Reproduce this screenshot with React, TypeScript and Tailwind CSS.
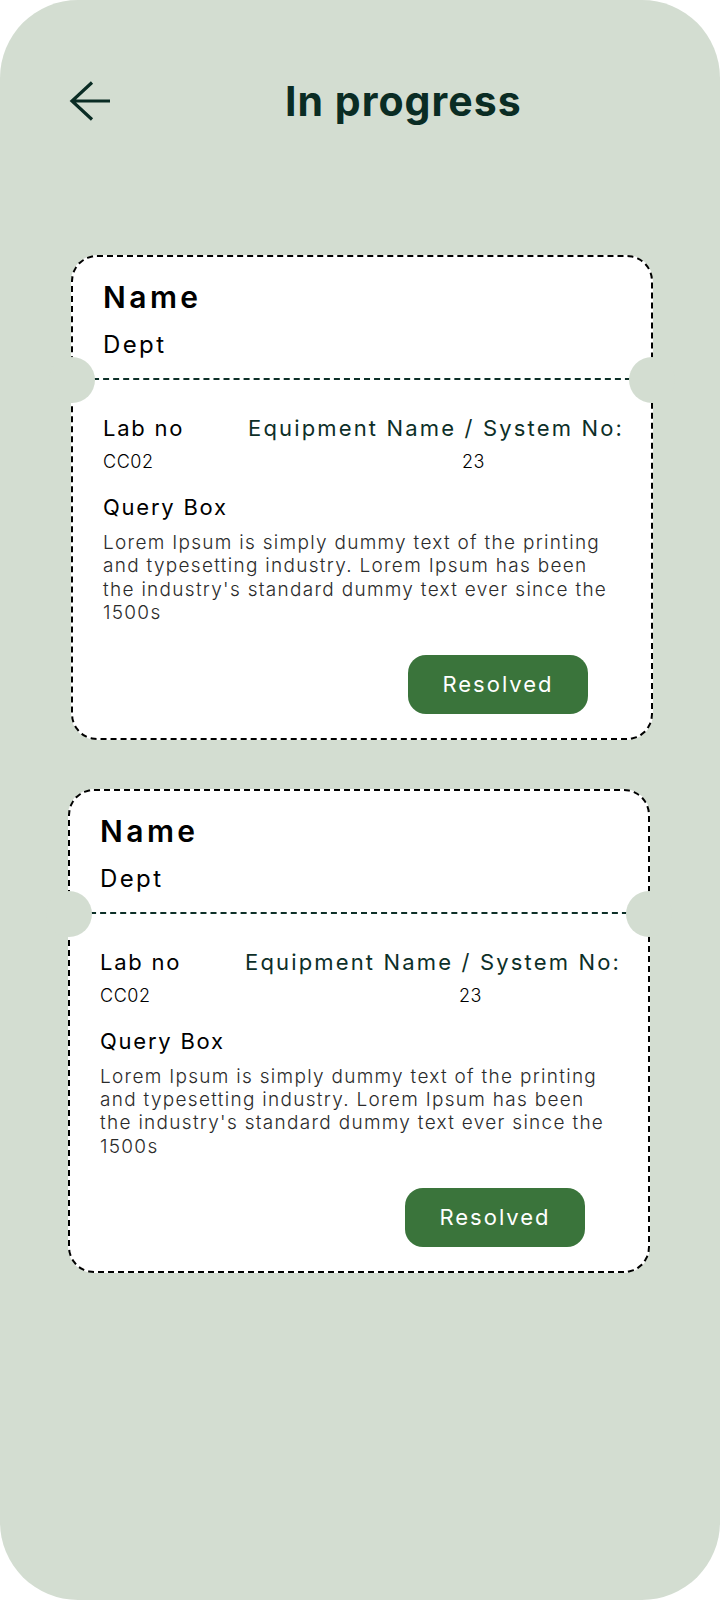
import React from "react";

const font = { fontFamily: "Inter, 'Noto Sans', sans-serif" };

function Ticket({ offset }: { offset: string }) {
  return (
    <div
      className={`relative w-[582px] rounded-[26px] border-2 border-dashed border-black bg-white ${offset}`}
    >
      {/* top part */}
      <div className="px-[30px] pt-[22px] h-[121px]">
        <h2 className="text-[30px] font-semibold leading-[36px] text-black tracking-[0.115em]">Name</h2>
        <p className="mt-[15px] text-[24px] font-normal leading-[30px] text-black tracking-[0.1em]">Dept</p>
      </div>

      {/* divider */}
      <div className="border-t-2 border-dashed border-[#0d2f28]" />

      {/* notches */}
      <span className="absolute left-[-24px] top-[100px] h-[46px] w-[46px] rounded-full bg-[#d3ddd1]" />
      <span className="absolute right-[-24px] top-[100px] h-[46px] w-[46px] rounded-full bg-[#d3ddd1]" />

      <div className="px-[30px] pt-[34px] pb-[24px]">
        <div className="flex items-baseline whitespace-nowrap text-[22px] leading-[28px] tracking-[0.08em]">
          <span className="w-[145px] shrink-0 text-black">Lab no</span>
          <span className="text-[#0d2f28] tracking-[0.098em]">Equipment Name / System No:</span>
        </div>
        <div className="mt-[8px] flex items-baseline text-[18px] font-light leading-[24px] text-black tracking-[0.03em]">
          <span className="w-[359px] shrink-0">CC02</span>
          <span>23</span>
        </div>

        <h3 className="mt-[19px] text-[22px] leading-[28px] text-black tracking-[0.08em]">Query Box</h3>
        <p className="mt-[10px] whitespace-nowrap text-[19px] font-light leading-[23.4px] text-[#2b2b2b] tracking-[0.068em]">
          Lorem Ipsum is simply dummy text of the printing
          <br />
          and typesetting industry. Lorem Ipsum has been
          <br />
          the industry's standard dummy text ever since the
          <br />
          1500s
        </p>

        <div className="mt-[30px] flex justify-end pr-[33px]">
          <button className="h-[59px] w-[180px] rounded-[18px] bg-[#3a743b] text-[22px] font-normal text-white tracking-[0.09em]">
            Resolved
          </button>
        </div>
      </div>
    </div>
  );
}

export default function App() {
  return (
    <div className="h-[1600px] w-[720px] bg-white" style={font}>
      <div className="h-full w-full overflow-hidden rounded-[78px] bg-[#d3ddd1]">
        {/* Header */}
        <header className="flex items-center pl-[69px] pt-[78px]">
          <svg width="42" height="40" viewBox="0 0 42 40" fill="none" className="text-[#0a2c24]">
            <path d="M41 20H3M23 1.5L3 20l20 18.5" stroke="currentColor" strokeWidth="3.2" />
          </svg>
          <h1 className="ml-[174px] text-[41px] font-bold leading-[46px] text-[#0a2c24] tracking-[0.025em]">
            In progress
          </h1>
        </header>

        <main className="mt-[131px] flex flex-col gap-[49px]">
          <Ticket offset="ml-[71px]" />
          <Ticket offset="ml-[68px]" />
        </main>
      </div>
    </div>
  );
}
